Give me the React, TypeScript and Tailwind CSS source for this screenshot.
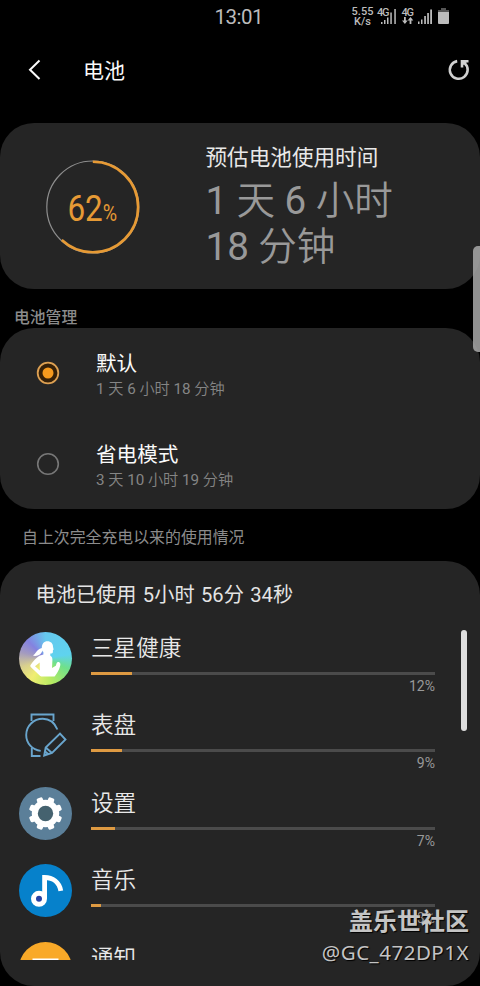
import type { ReactNode } from 'react';

interface Usage {
  name: string;
  percent?: number;
  fill: number;
  icon: ReactNode;
}

// Chinese glyphs are set a little lighter than the digits between them
const Duration = ({ text }: { text: string }) => (
  <>
    {text.split(/(\d+)/).map((part, i) => (
      <span key={i} className={i % 2 ? 'font-normal' : 'font-[350]'}>
        {part}
      </span>
    ))}
  </>
);

const HealthIcon = () => (
  <div className="size-[53px] overflow-hidden rounded-full bg-[conic-gradient(from_0deg,#66c8ee,#5fd3ee_80deg,#6fe08a_115deg,#b6ea62_165deg,#f0ee72_215deg,#d9d08e_250deg,#a39ac0_285deg,#8482e0_315deg,#66c8ee)]">
    <svg viewBox="0 0 53 53" className="size-full" fill="#fff">
      <path d="M22.800 16c0-4.200 2.200-6.800 5.600-6.800 3.600 0 5.600 2.400 5.600 5.500l.6 2.700-.7.800v1.800c0 1.300-1 1.500-2.600 1.500v2.200c1.700 1 2.300 2.400 2.100 4.700L33 36l3.800-2.300.9-2.700c.5-1 1.500-1.300 2.500-.7 1.500.8 1.300 2.500.8 4.200-1 3.300-2.500 6.300-4.800 9.200-.5.700-1 .9-1.900.9H23c-1 0-1.600-.4-2.300-1.100L12 35.200c-.9-.9-.9-1.500-.3-2.400 2.700-4 5.600-7.200 8.700-9.100l4-1.200v-2.400c-.6-.4-1-1-1.100-1.700-.7 3.300-3.500 5.400-7 5.500-1 .1-1.800-.2-2.300-.7 2.800-.9 3-5.500 8.800-7.200zM20.700 30.500l-4.700 3.700 4.800 4.200z" fillRule="evenodd" />
    </svg>
  </div>
);

const WatchIcon = () => (
  <svg viewBox="0.800 0 53 53" className="size-[53px]" fill="none" stroke="#69a5cd" strokeWidth="1.900">
    <path d="M13.300 12V5.500h22V12" />
    <path d="M39.200 20.500C36.500 14 31 9.800 24.500 9.800 15.400 9.800 8 17 8 26c0 8.300 6 14.900 14.500 15.900" />
    <path d="M13.600 39v8h8.700" />
    <path d="M26 46.500l1.500-8L41.800 24.500l5.500 6-13.500 13.500zM27.500 38.500l6.300 5.500M27 42.500l3.500 3" />
  </svg>
);

const SettingsIcon = () => (
  <svg viewBox="0 0 53 53" className="size-[53px]">
    <circle cx="26.500" cy="26.500" r="26.500" fill="#5b7f99" />
    <circle cx="26.500" cy="26.500" r="13.700" fill="#fff" />
    {[22.5, 67.5, 112.5, 157.5].map((angle) => (
      <rect key={angle} x="23.400" y="9.700" width="6.200" height="33.600" rx="1.600" fill="#fff" transform={`rotate(${angle} 26.500 26.500)`} />
    ))}
    <circle cx="26.500" cy="26.500" r="7.700" fill="#45626f" />
  </svg>
);

const MusicIcon = () => (
  <svg viewBox="0 0 53 53" className="size-[53px]">
    <circle cx="26.500" cy="26.500" r="26.500" fill="#0681cb" />
    <circle cx="20" cy="34.800" r="5.500" fill="#2540a5" stroke="#fff" strokeWidth="5" />
    <path d="M25.600 34.800V13.500c8 0 14.700 4.500 16.200 13.300" fill="none" stroke="#fff" strokeWidth="4.800" />
  </svg>
);

const NoticeIcon = () => (
  <svg viewBox="0 0 53 53" className="size-[53px]">
    <circle cx="26.500" cy="26.500" r="26.500" fill="#f9a928" />
    <path d="M13.500 16.500h26v18h-26z" fill="#fff" />
  </svg>
);

const apps: Usage[] = [
  { name: '三星健康', percent: 12, fill: 41, icon: <HealthIcon /> },
  { name: '表盘', percent: 9, fill: 31, icon: <WatchIcon /> },
  { name: '设置', percent: 7, fill: 24, icon: <SettingsIcon /> },
  { name: '音乐', percent: 3, fill: 10, icon: <MusicIcon /> },
  { name: '通知', fill: 8, icon: <NoticeIcon /> },
];

const StatusBar = () => (
  <header className="flex h-[34px] shrink-0 text-[#bcbcbc]">
    <div className="w-[351px] pl-[214.500px] text-[20.500px] leading-[34px] tracking-[-0.500px]">13:01</div>
    <div className="w-[23px] pt-[7px] text-center text-[11px] leading-[9.500px] font-medium">
      <div>5.55</div>
      <div>K/s</div>
    </div>
    <svg width="84" height="34" viewBox="374 0 84 34" fill="#bcbcbc">
      <g className="text-[11px] font-medium">
        <text x="377" y="15.500" textLength="12.500">4G</text>
        <text x="401.500" y="15.500" textLength="12.500">4G</text>
      </g>
      <path d="M381 22h1.500v2H381zM384 20h1.500v4H384zM387 17.500h1.500V24H387zM390.300 12.500h1.500V24h-1.500zM394.300 9h1.500v15h-1.500z" />
      <path d="M404 17h1.800v3.500h1.900L404.900 24 402 20.500h2zM409.600 24h1.800v-3.500h1.900L410.500 17l-2.900 3.500h2z" />
      <path d="M418 21.500h1.500V24H418zM421 19.500h1.500V24H421zM424.200 16h1.700v8h-1.700zM427.200 13h1.700v11h-1.700zM430.200 9.500h1.800V24h-1.800z" />
      <path d="M441 8h5v2h3v3h-11v-3h3z" fill="#555" />
      <path d="M438 12h11v11a1 1 0 0 1-1 1h-9a1 1 0 0 1-1-1z" />
    </svg>
  </header>
);

const TitleBar = () => (
  <div className="flex h-[89px] shrink-0 items-start">
    <svg className="mt-[24px] ml-[26px]" width="18" height="24" viewBox="0 0 18 24" fill="none" stroke="#fafafa" strokeWidth="2">
      <path d="M13.500 2.500L4 11.700l9.500 9.300" />
    </svg>
    <h1 className="ml-[39px] text-[21px] leading-[74px] text-[#fafafa]">电池</h1>
    <svg className="mt-[23px] mr-[9px] ml-auto" width="24" height="26" viewBox="0 0 24 26" fill="none" stroke="#d0d0d0" strokeWidth="2.600">
      <path d="M10.200 4.100A8.900 8.900 0 1 0 17.400 6" />
      <path d="M15 10.500V4.300h6.500" strokeWidth="2.600" />
      <path d="M15 4h6.300L15 9z" fill="#d0d0d0" stroke="none" />
    </svg>
  </div>
);

const EstimateCard = () => (
  <section className="flex h-[166px] shrink-0 rounded-[34px] bg-[#252525]">
    <div className="mt-[37px] ml-[45px] grid size-[96px] place-items-center">
      <svg viewBox="0 0 96 96" className="col-start-1 row-start-1 size-[96px]" fill="none">
        <circle cx="47.800" cy="47" r="46" stroke="#8e8e8e" strokeWidth="1.200" />
        <circle cx="47.800" cy="47" r="45.300" stroke="#e69a35" strokeWidth="2.600" pathLength="100" strokeDasharray="62 38" transform="rotate(-90 47.800 47)" />
      </svg>
      <div className="col-start-1 row-start-1 mr-px flex scale-x-[0.850] items-baseline text-[37px] leading-none text-[#e69a35]">
        62<span className="text-[23px]">%</span>
      </div>
    </div>
    <div className="ml-[64.500px] pt-[21px]">
      <h2 className="text-[21.600px] leading-[28px] text-[#e8e8e8]">预估电池使用时间</h2>
      <p className="mt-[6px] text-[38.600px] leading-[46px] whitespace-nowrap text-[#999]">
        <Duration text="1 天 6 小时" />
        <br />
        <Duration text="18 分钟" />
      </p>
    </div>
  </section>
);

interface ModeProps {
  title: string;
  time: string;
  selected?: boolean;
}

const Mode = ({ title, time, selected }: ModeProps) => (
  <div className="flex h-[90.500px] items-start pl-[36px]">
    <svg className="mt-[33px]" width="24" height="24" viewBox="0 0 24 24" fill="none">
      {selected ? (
        <>
          <circle cx="12" cy="12" r="10.300" fill="#352008" stroke="#dda052" strokeWidth="1.800" />
          <circle cx="12" cy="12" r="5.500" fill="#f69a1e" />
        </>
      ) : (
        <circle cx="12" cy="12" r="10.300" stroke="#777" strokeWidth="1.600" />
      )}
    </svg>
    <div className="ml-[36px] pt-[22px]">
      <h3 className="text-[20.600px] leading-[29px] text-[#fafafa]">{title}</h3>
      <p className="text-[15.200px] leading-[20px] text-[#858585]">
        <Duration text={time} />
      </p>
    </div>
  </div>
);

const AppRow = ({ name, percent, fill, icon }: Usage) => (
  <div className="flex h-[77.400px] shrink-0 pl-[18.500px]">
    {icon}
    <div className="ml-[19.500px] w-[344px]">
      <h3 className="h-[40px] pt-px text-[22.600px] leading-[32px] font-[350] text-[#e8e8e8]">{name}</h3>
      <div className="h-[3px] bg-[#4b4b4b]">
        <div className="h-full bg-[#de9a42]" style={{ width: fill }} />
      </div>
      {percent && <p className="text-right text-[14px] leading-[22px] text-[#999]">{percent}%</p>}
    </div>
  </div>
);

const UsageCard = () => (
  <section className="h-[425px] shrink-0 rounded-[34px] bg-[#252525]">
    <h2 className="h-[69px] pt-[19px] pl-[35.500px] text-[20.200px] leading-[30px] text-[#e4e4e4] [word-spacing:1.400px]">电池已使用 5小时 56分 34秒</h2>
    <div className="flex h-[330px] overflow-hidden">
      <div className="w-[461px] pt-[2px]">
        {apps.map((app) => (
          <AppRow key={app.name} {...app} />
        ))}
      </div>
      <div className="h-[101px] w-[6px] rounded-full bg-[#dedede]" />
    </div>
  </section>
);

const App = () => {
  return (
    <main className="relative flex h-[986px] w-[480px] flex-col overflow-hidden bg-black font-['Roboto','Noto_Sans_CJK_SC',sans-serif]">
      <StatusBar />
      <TitleBar />
      <EstimateCard />
      <h2 className="h-[39px] shrink-0 pt-[18px] pl-[14px] text-[15.800px] leading-[21px] font-medium text-[#8b8b8b]">电池管理</h2>
      <section className="h-[181px] shrink-0 rounded-[34px] bg-[#252525]">
        <Mode title="默认" time="1 天 6 小时 18 分钟" selected />
        <Mode title="省电模式" time="3 天 10 小时 19 分钟" />
      </section>
      <h2 className="h-[52px] shrink-0 pt-[17px] pl-[22px] text-[15.900px] leading-[24px] text-[#8b8b8b]">自上次完全充电以来的使用情况</h2>
      <UsageCard />

      <div className="absolute top-[246px] right-[-4px] h-[106px] w-[11px] rounded-[5px] bg-[#a9a9a9]/85" />
      <div className="absolute right-[11px] bottom-[20px] text-right whitespace-nowrap text-[#c4c4c4] [text-shadow:1px_1px_1px_#000]">
        <p className="text-[24px] leading-[31px] font-bold">盖乐世社区</p>
        <p className="font-['Noto_Sans',sans-serif] text-[20.500px] leading-[28px] tracking-[0.500px]">@GC_472DP1X</p>
      </div>
    </main>
  );
};

export default App;
